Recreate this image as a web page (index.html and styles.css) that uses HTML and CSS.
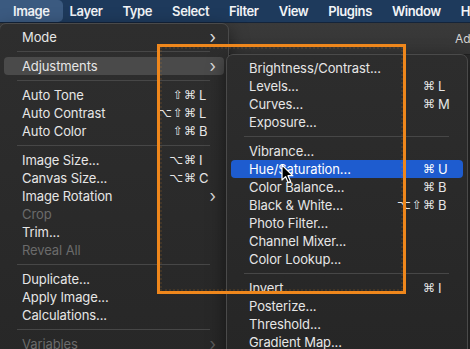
FILE: index.html
```html
<!DOCTYPE html>
<html lang="en">
<head>
  <meta charset="UTF-8">
  <meta name="viewport" content="width=device-width, initial-scale=1.0">
  <title>Image menu</title>
  <link rel="stylesheet" href="styles.css">
</head>
<body>
  <header class="menubar">
    <span class="mb-item active">Image</span>
    <span class="mb-item">Layer</span>
    <span class="mb-item">Type</span>
    <span class="mb-item">Select</span>
    <span class="mb-item">Filter</span>
    <span class="mb-item">View</span>
    <span class="mb-item">Plugins</span>
    <span class="mb-item">Window</span>
    <span class="mb-item">Help</span>
  </header>

  <div class="optionsbar">
    <span class="panel-title">Adjustments</span>
  </div>

  <!-- Image menu -->
  <div class="menu image-menu">
    <div class="item"><span class="label">Mode</span><span class="arrow">›</span></div>
    <div class="sep"></div>
    <div class="item hover"><span class="label">Adjustments</span><span class="arrow">›</span></div>
    <div class="sep"></div>
    <div class="item"><span class="label">Auto Tone</span><span class="sc"><span class="mods">⇧⌘</span><span class="key">L</span></span></div>
    <div class="item"><span class="label">Auto Contrast</span><span class="sc"><span class="mods">⌥⇧⌘</span><span class="key">L</span></span></div>
    <div class="item"><span class="label">Auto Color</span><span class="sc"><span class="mods">⇧⌘</span><span class="key">B</span></span></div>
    <div class="sep"></div>
    <div class="item"><span class="label">Image Size...</span><span class="sc"><span class="mods">⌥⌘</span><span class="key">I</span></span></div>
    <div class="item"><span class="label">Canvas Size...</span><span class="sc"><span class="mods">⌥⌘</span><span class="key">C</span></span></div>
    <div class="item"><span class="label">Image Rotation</span><span class="arrow">›</span></div>
    <div class="item disabled"><span class="label">Crop</span></div>
    <div class="item"><span class="label">Trim...</span></div>
    <div class="item disabled"><span class="label">Reveal All</span></div>
    <div class="sep"></div>
    <div class="item"><span class="label">Duplicate...</span></div>
    <div class="item"><span class="label">Apply Image...</span></div>
    <div class="item"><span class="label">Calculations...</span></div>
    <div class="sep"></div>
    <div class="item disabled"><span class="label">Variables</span><span class="arrow">›</span></div>
  </div>

  <!-- Adjustments submenu -->
  <div class="menu sub-menu">
    <div class="item"><span class="label">Brightness/Contrast...</span></div>
    <div class="item"><span class="label">Levels...</span><span class="sc"><span class="mods">⌘</span><span class="key">L</span></span></div>
    <div class="item"><span class="label">Curves...</span><span class="sc"><span class="mods">⌘</span><span class="key">M</span></span></div>
    <div class="item"><span class="label">Exposure...</span></div>
    <div class="sep"></div>
    <div class="item"><span class="label">Vibrance...</span></div>
    <div class="item selected"><span class="label">Hue/Saturation...</span><span class="sc"><span class="mods">⌘</span><span class="key">U</span></span></div>
    <div class="item"><span class="label">Color Balance...</span><span class="sc"><span class="mods">⌘</span><span class="key">B</span></span></div>
    <div class="item"><span class="label">Black &amp; White...</span><span class="sc"><span class="mods">⌥⇧⌘</span><span class="key">B</span></span></div>
    <div class="item"><span class="label">Photo Filter...</span></div>
    <div class="item"><span class="label">Channel Mixer...</span></div>
    <div class="item"><span class="label">Color Lookup...</span></div>
    <div class="sep"></div>
    <div class="item"><span class="label">Invert</span><span class="sc"><span class="mods">⌘</span><span class="key">I</span></span></div>
    <div class="item"><span class="label">Posterize...</span></div>
    <div class="item"><span class="label">Threshold...</span></div>
    <div class="item"><span class="label">Gradient Map...</span></div>
  </div>

  <!-- annotation box -->
  <div class="highlight-box"></div>

  <!-- mouse pointer -->
  <svg class="cursor" width="13" height="20" viewBox="0 0 13 20">
    <path d="M1 1 L1 16 L4.6 12.6 L7.2 18.6 L9.6 17.6 L7 11.7 L11.8 11.7 Z" fill="#000" stroke="#fff" stroke-width="1.2" stroke-linejoin="round"/>
  </svg>
</body>
</html>
```

FILE: styles.css
```css
* { box-sizing: border-box; margin: 0; padding: 0; }
body { width: 470px; height: 349px; overflow: hidden; background: #2a2a2a; color: #e6e6e6; font-family: Inter, "DejaVu Sans", sans-serif; font-size: 13px; position: relative; }

.menubar { height: 23px; background: #1e3a5c; display: flex; align-items: center; border-bottom: 1px solid #14243a; white-space: nowrap; }
.mb-item { height: 22px; line-height: 22px; padding: 0 10px; font-weight: 600; color: #f2f4f7; letter-spacing: -0.4px; }
.mb-item.active { background: #3b5a80; padding: 0 13px; border-radius: 0 5px 5px 0; margin-right: -3px; }

.optionsbar { height: 32px; background: linear-gradient(#3a3a3a, #353535); border-bottom: 1px solid #222; padding-left: 455px; white-space: nowrap; overflow: hidden; line-height: 30px; }
.panel-title { color: #d4d4d4; font-size: 12px; }

.menu { position: absolute; background: #2b2b2b; border: 1px solid #4a4a4a; border-radius: 7px; padding: 4px 0; box-shadow: 0 6px 18px rgba(0, 0, 0, 0.5); }
.image-menu { left: -1px; top: 23px; width: 230px; height: 340px; background: linear-gradient(#2e2e2e, #272727); }
.sub-menu { left: 226px; top: 54px; width: 242px; height: 310px; background: linear-gradient(#2d2d2d, #262626); }

.item { height: 18px; display: flex; align-items: center; margin: 0 4px; padding: 0 9px 0 18px; border-radius: 4px; white-space: nowrap; letter-spacing: -0.1px; }
.item .label { flex: 1; }
.item.hover { background: #4a4a4a; }
.item.selected { background: #1e5ccf; color: #fff; }
.item.disabled { color: #6b6b6b; }

.sc { display: flex; align-items: center; margin-right: 6px; font-family: "DejaVu Sans", sans-serif; font-size: 12px; }
.mods { letter-spacing: 1px; }
.key { width: 12px; padding-left: 2px; font-family: Inter, "DejaVu Sans", sans-serif; font-size: 13px; }
.arrow { font-size: 17px; line-height: 18px; color: #d8d8d8; margin-right: -1px; }
.item.disabled .arrow { color: #5c5c5c; }

.sep { height: 11px; position: relative; margin: 0 18px 0 17px; }
.sep::after { content: ""; position: absolute; left: 0; right: 0; top: 5px; height: 1px; background: #474747; }

.highlight-box { position: absolute; left: 157px; top: 44px; width: 249px; height: 250px; border: 3px solid #ef871c; }
.highlight-box::after { content: ""; position: absolute; inset: 0; border: 2px dotted rgba(238, 138, 29, 0.12); }

.cursor { position: absolute; left: 281px; top: 164px; }
```
